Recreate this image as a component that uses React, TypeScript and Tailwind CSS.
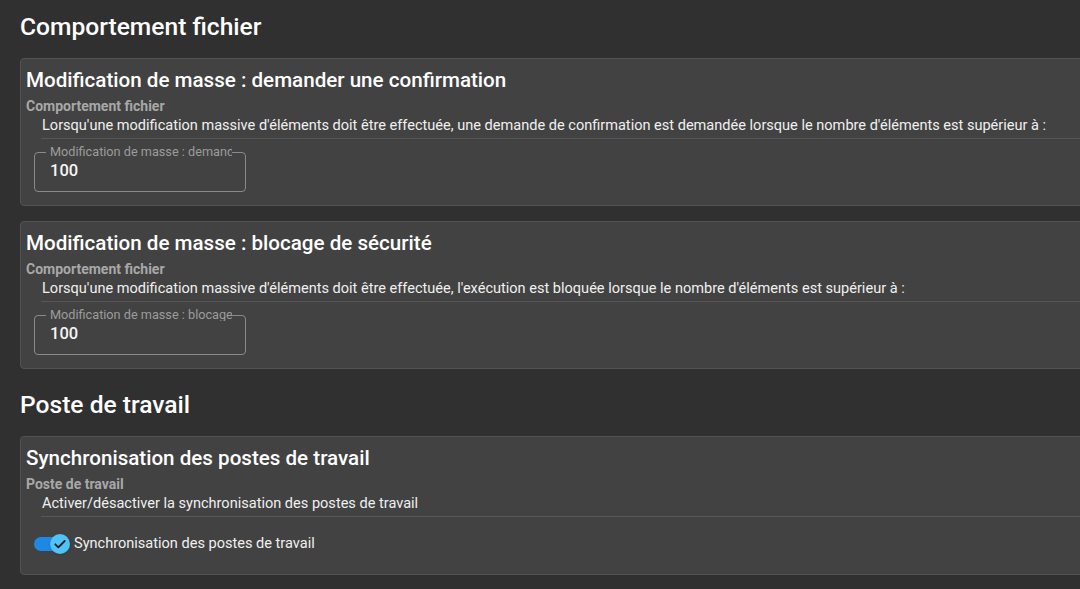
import React from "react";

function Card({
  title,
  subtitle,
  desc,
  children,
}: {
  title: string;
  subtitle: string;
  desc: string;
  children: React.ReactNode;
}) {
  return (
    <div className="w-[1100px] rounded-[4px] border border-[#525252] bg-[#424242] px-[5px] pt-[8px]">
      <div className="text-[20.6px] font-medium leading-[26px] text-white">{title}</div>
      <div className="mt-[4px] text-[14px] font-bold leading-[18px] text-[#a8a8a8]">{subtitle}</div>
      <div className="ml-[15px] border-b border-[#585858] pl-[1px] pt-[2px] pb-[3px] text-[14.55px] leading-[18px] text-[#f0f0f0]">
        {desc}
      </div>
      {children}
    </div>
  );
}

function NumberField({ label }: { label: string }) {
  return (
    <fieldset className="ml-[8px] mt-[7px] mb-[13px] h-[46px] w-[212px] rounded-[4px] border border-[#8a8a8a] px-[11px]">
      <legend className="max-w-[186px] overflow-hidden whitespace-nowrap px-[4px] text-[12.7px] leading-[12px] text-[#9c9c9c]">
        {label}
      </legend>
      <div className="pl-[4px] pt-[3px] text-[16.5px] font-medium leading-[20px] text-[#f5f5f5]">100</div>
    </fieldset>
  );
}

export default function App() {
  return (
    <div
      className="h-[589px] w-full overflow-hidden bg-[#303030] pl-[20px] pt-[11px]"
      style={{ fontFamily: "Roboto, 'Noto Sans', sans-serif" }}
    >
      <h1 className="text-[24.6px] font-medium leading-[32px] text-white">Comportement fichier</h1>
      <div className="mt-[15px] flex flex-col gap-[15px]">
        <Card
          title="Modification de masse : demander une confirmation"
          subtitle="Comportement fichier"
          desc="Lorsqu'une modification massive d'éléments doit être effectuée, une demande de confirmation est demandée lorsque le nombre d'éléments est supérieur à :"
        >
          <NumberField label="Modification de masse : demander une confirmation" />
        </Card>
        <Card
          title="Modification de masse : blocage de sécurité"
          subtitle="Comportement fichier"
          desc="Lorsqu'une modification massive d'éléments doit être effectuée, l'exécution est bloquée lorsque le nombre d'éléments est supérieur à :"
        >
          <NumberField label="Modification de masse : blocage de sécurité" />
        </Card>
      </div>
      <h1 className="mt-[20px] text-[24.6px] font-medium leading-[32px] text-white">Poste de travail</h1>
      <div className="mt-[15px]">
        <Card
          title="Synchronisation des postes de travail"
          subtitle="Poste de travail"
          desc="Activer/désactiver la synchronisation des postes de travail"
        >
          <div className="mt-[17px] mb-[20px] ml-[8px] flex items-center gap-[4px]">
            <div className="relative h-[20px] w-[36px]">
              <div className="absolute left-0 top-[3px] h-[14px] w-[34px] rounded-full bg-[#1e88e5]" />
              <div className="absolute left-[16px] top-0 flex h-[20px] w-[20px] items-center justify-center rounded-full bg-[#4fc3f7] shadow">
                <svg width="16" height="16" viewBox="0 0 24 24" fill="none">
                  <path d="M5 12.5l4.5 4.5L19 7.5" stroke="#1b1b1b" strokeWidth="2.8" strokeLinecap="round" strokeLinejoin="round" />
                </svg>
              </div>
            </div>
            <span className="text-[14.55px] leading-[18px] text-[#f0f0f0]">Synchronisation des postes de travail</span>
          </div>
        </Card>
      </div>
    </div>
  );
}
